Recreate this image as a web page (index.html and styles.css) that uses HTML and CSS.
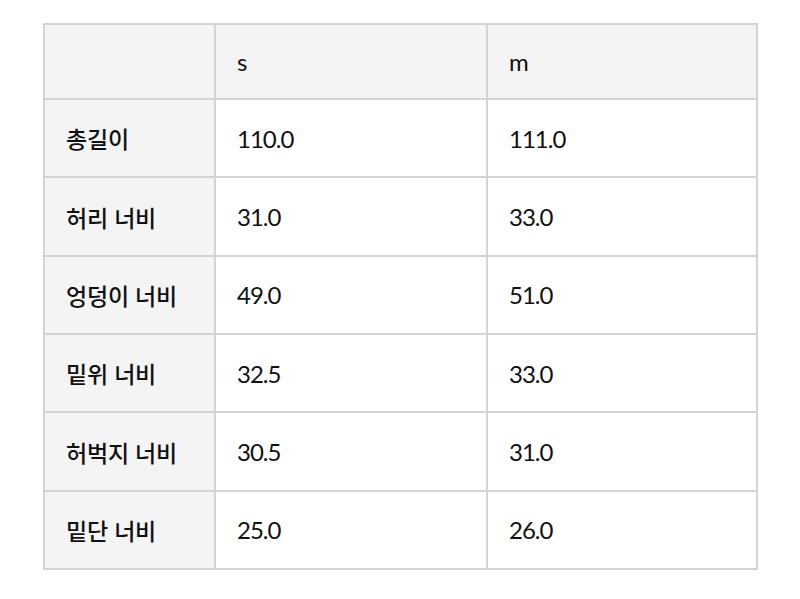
FILE: index.html
```html
<!DOCTYPE html>
<html lang="ko">
<head>
<meta charset="utf-8">
<link rel="stylesheet" href="styles.css">
</head>
<body>
<table class="size-table">
  <colgroup>
    <col class="c-label">
    <col class="c-val">
    <col class="c-val2">
  </colgroup>
  <thead>
    <tr class="head-row">
      <th class="label"></th>
      <th class="val">s</th>
      <th class="val">m</th>
    </tr>
  </thead>
  <tbody>
    <tr><th class="label">총길이</th><td class="val">110.0</td><td class="val">111.0</td></tr>
    <tr><th class="label">허리 너비</th><td class="val">31.0</td><td class="val">33.0</td></tr>
    <tr><th class="label">엉덩이 너비</th><td class="val">49.0</td><td class="val">51.0</td></tr>
    <tr><th class="label">밑위 너비</th><td class="val">32.5</td><td class="val">33.0</td></tr>
    <tr><th class="label">허벅지 너비</th><td class="val">30.5</td><td class="val">31.0</td></tr>
    <tr><th class="label">밑단 너비</th><td class="val">25.0</td><td class="val">26.0</td></tr>
  </tbody>
</table>
</body>
</html>
```
FILE: styles.css
```css
html, body {
  margin: 0;
  padding: 0;
  background: #ffffff;
}
body {
  padding: 23px 0 0 43px;
}
.size-table {
  border-collapse: collapse;
  table-layout: fixed;
  width: 713px;
  color: #111111;
}
.c-label { width: 171px; }
.c-val { width: 272px; }
.c-val2 { width: 270px; }
.size-table th,
.size-table td {
  border: 2px solid #d3d3d3;
  text-align: left;
  vertical-align: middle;
  padding: 0 0 0 21px;
  height: 78.35px;
  box-sizing: border-box;
}
.head-row th {
  height: 75px;
  background: #f4f4f4;
}
.label {
  background: #f4f4f4;
  font-family: "Noto Sans CJK KR", "Noto Sans", sans-serif;
  font-weight: 500;
  font-size: 23px;
  letter-spacing: -0.2px;
}
.val {
  font-family: "Lato", "Liberation Sans", sans-serif;
  font-weight: 400;
  font-size: 24px;
  letter-spacing: -1px;
  padding-top: 2px;
}
.head-row .val {
  padding-top: 0;
}
```
